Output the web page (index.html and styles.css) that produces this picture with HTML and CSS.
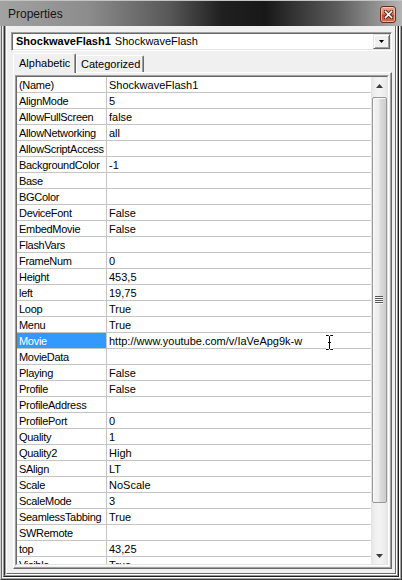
FILE: index.html
```html
<!DOCTYPE html>
<html>
<head>
<meta charset="utf-8">
<link rel="stylesheet" href="styles.css">
</head>
<body>
<div class="window">
  <div class="titlebar">
    <span class="title">Properties</span>
    <div class="close">
      <svg width="9" height="9" viewBox="0 0 9 9"><path d="M1.5 1.5 L7.5 7.5 M7.5 1.5 L1.5 7.5" stroke="#5a2418" stroke-width="3.4" stroke-linecap="square"/><path d="M1.5 1.5 L7.5 7.5 M7.5 1.5 L1.5 7.5" stroke="#ffffff" stroke-width="1.6" stroke-linecap="square"/></svg>
    </div>
  </div>
  <div class="fr fr1"><div class="fr fr2"><div class="fr fr3"><div class="fr fr4"><div class="fr fr5"><div class="fr fr6"><div class="fr fr7">
    <div class="client">
      <div class="combo">
        <span class="combo-text"><b>ShockwaveFlash1</b> ShockwaveFlash</span>
        <div class="combo-btn"><svg width="5" height="3" viewBox="0 0 5 3"><path d="M0 0 H5 L2.5 3 Z" fill="#000"/></svg></div>
      </div>
      <div class="tabs">
        <div class="tab sel">Alphabetic</div>
        <div class="tab">Categorized</div>
      </div>
      <div class="page">
        <div class="grid"><div class="grid-in">
          <div class="rows">
            <div class="row"><div class="name">(Name)</div><div class="val">ShockwaveFlash1</div></div>
            <div class="row"><div class="name">AlignMode</div><div class="val">5</div></div>
            <div class="row"><div class="name">AllowFullScreen</div><div class="val">false</div></div>
            <div class="row"><div class="name">AllowNetworking</div><div class="val">all</div></div>
            <div class="row"><div class="name">AllowScriptAccess</div><div class="val"></div></div>
            <div class="row"><div class="name">BackgroundColor</div><div class="val">-1</div></div>
            <div class="row"><div class="name">Base</div><div class="val"></div></div>
            <div class="row"><div class="name">BGColor</div><div class="val"></div></div>
            <div class="row"><div class="name">DeviceFont</div><div class="val">False</div></div>
            <div class="row"><div class="name">EmbedMovie</div><div class="val">False</div></div>
            <div class="row"><div class="name">FlashVars</div><div class="val"></div></div>
            <div class="row"><div class="name">FrameNum</div><div class="val">0</div></div>
            <div class="row"><div class="name">Height</div><div class="val">453,5</div></div>
            <div class="row"><div class="name">left</div><div class="val">19,75</div></div>
            <div class="row"><div class="name">Loop</div><div class="val">True</div></div>
            <div class="row"><div class="name">Menu</div><div class="val">True</div></div>
            <div class="row"><div class="name selected">Movie</div><div class="val">http://www.youtube.com/v/IaVeApg9k-w</div></div>
            <div class="row"><div class="name">MovieData</div><div class="val"></div></div>
            <div class="row"><div class="name">Playing</div><div class="val">False</div></div>
            <div class="row"><div class="name">Profile</div><div class="val">False</div></div>
            <div class="row"><div class="name">ProfileAddress</div><div class="val"></div></div>
            <div class="row"><div class="name">ProfilePort</div><div class="val">0</div></div>
            <div class="row"><div class="name">Quality</div><div class="val">1</div></div>
            <div class="row"><div class="name">Quality2</div><div class="val">High</div></div>
            <div class="row"><div class="name">SAlign</div><div class="val">LT</div></div>
            <div class="row"><div class="name">Scale</div><div class="val">NoScale</div></div>
            <div class="row"><div class="name">ScaleMode</div><div class="val">3</div></div>
            <div class="row"><div class="name">SeamlessTabbing</div><div class="val">True</div></div>
            <div class="row"><div class="name">SWRemote</div><div class="val"></div></div>
            <div class="row"><div class="name">top</div><div class="val">43,25</div></div>
            <div class="row"><div class="name">Visible</div><div class="val">True</div></div>
          </div>
          <div class="scroll">
            <div class="sb-btn"><svg width="7" height="4" viewBox="0 0 7 4"><path d="M3.5 0 L7 4 H0 Z" fill="#3c3c3c"/></svg></div>
            <div class="track">
              <div class="thumb"><div class="grip"></div></div>
            </div>
            <div class="sb-btn"><svg width="7" height="4" viewBox="0 0 7 4"><path d="M0 0 H7 L3.5 4 Z" fill="#3c3c3c"/></svg></div>
          </div>
        </div></div>
      </div>
    </div>
  </div></div></div></div></div></div></div>
  <svg class="ibeam" width="9" height="17" viewBox="0 0 9 17">
    <path d="M1 1.5 H3.5 L4.5 2.5 L5.5 1.5 H8 M4.5 2.5 V14.5 M1 15.5 H3.5 L4.5 14.5 L5.5 15.5 H8 M3 8.5 H6" stroke="#fff" stroke-width="3" fill="none"/>
    <path d="M1 1.5 H3.5 L4.5 2.5 L5.5 1.5 H8 M4.5 2.5 V14.5 M1 15.5 H3.5 L4.5 14.5 L5.5 15.5 H8 M3 8.5 H6" stroke="#000" stroke-width="1" fill="none"/>
  </svg>
</div>
</body>
</html>
```
FILE: styles.css
```css
html, body {
  margin: 0;
  padding: 0;
}
body {
  width: 402px;
  height: 580px;
  overflow: hidden;
  font-family: "Liberation Sans", Arial, sans-serif;
  font-size: 11px;
  color: #000;
}
.window {
  position: relative;
  width: 402px;
  height: 580px;
  display: flex;
  flex-direction: column;
  background: #f0f0f0;
}
.titlebar {
  flex: none;
  height: 26px;
  box-sizing: border-box;
  display: flex;
  align-items: center;
  justify-content: space-between;
  padding: 0 6px 0 8px;
  border-top: 1px solid #c4c4c4;
  background: linear-gradient(to right, #a2a2a2 0%, #8c8c8c 22%, #585858 42%, #202020 55%, #181818 66%, #5c5c5c 84%, #9e9e9e 96%, #b4b4b4 100%);
}
.title {
  font-size: 12px;
  color: #141414;
}
.close {
  width: 16px;
  height: 17px;
  box-sizing: border-box;
  border: 1px solid #6a2a1c;
  border-radius: 3px;
  background: linear-gradient(to bottom, #eba592 0%, #de7b63 45%, #c9472c 55%, #d8704f 100%);
  box-shadow: inset 0 0 0 1px rgba(255, 220, 210, 0.6);
  display: flex;
  align-items: center;
  justify-content: center;
  margin-top: 1px;
}
.close svg {
  display: block;
}
.fr {
  flex: 1;
  min-height: 0;
  display: flex;
  flex-direction: column;
  border-style: solid;
  border-width: 0 1px 1px 1px;
}
.fr1 { border-color: #3c3c3c #3c3c3c #3c3c3c #cfcfcf; }
.fr2 { border-color: #a4a4a4 #a4a4a4 #a4a4a4 #6a6a6a; }
.fr3 { border-color: #ffffff #ffffff #ffffff #ececec; }
.fr4 { border-color: #1e1e1e #1e1e1e #1e1e1e #9a9a9a; }
.fr5 { border-color: #9a9a9a #9a9a9a #9a9a9a #2e2e2e; }
.fr6 { border-color: #ffffff #ffffff #ffffff #a4a4a4; }
.fr7 { border-color: #6a6a6a #6a6a6a #6a6a6a #ffffff; }
.client {
  flex: 1;
  min-height: 0;
  display: flex;
  flex-direction: column;
  background: #f0f0f0;
}
.combo {
  flex: none;
  margin: 6px 3px 0 4px;
  height: 19px;
  box-sizing: border-box;
  border: 1px solid;
  border-color: #a0a0a0 #ffffff #ffffff #a0a0a0;
  box-shadow: inset 1px 1px 0 #696969, inset -1px -1px 0 #e3e3e3;
  background: #fff;
  display: flex;
  align-items: center;
  padding-left: 4px;
}
.combo-text {
  white-space: nowrap;
  line-height: 15px;
}
.combo-text b {
  margin-right: 1px;
}
.combo-btn {
  margin-left: auto;
  margin-right: 1px;
  width: 17px;
  height: 15px;
  box-sizing: border-box;
  border: 1px solid;
  border-color: #e3e3e3 #696969 #696969 #e3e3e3;
  box-shadow: inset 1px 1px 0 #ffffff, inset -1px -1px 0 #a0a0a0;
  background: #f0f0f0;
  display: flex;
  align-items: center;
  justify-content: center;
}
.combo-btn svg {
  display: block;
}
.tabs {
  flex: none;
  height: 21px;
  margin-left: 6px;
  display: flex;
  align-items: flex-end;
  position: relative;
  z-index: 1;
}
.tab {
  box-sizing: border-box;
  width: 68px;
  height: 17px;
  border: 1px solid;
  border-color: #ffffff #696969 transparent #ffffff;
  border-bottom: 0;
  box-shadow: inset -1px 0 0 #a0a0a0;
  border-radius: 2px 2px 0 0;
  background: #f0f0f0;
  padding: 1px 0 0 4px;
  line-height: 14px;
  white-space: nowrap;
}
.tab.sel {
  width: 63px;
  height: 20px;
  margin-bottom: -1px;
  padding: 2px 0 0 5px;
}
.page {
  flex: none;
  margin: 0 3px 0 6px;
  height: 497px;
  box-sizing: border-box;
  border: 1px solid;
  border-color: #ffffff #696969 #696969 #ffffff;
  box-shadow: inset -1px -1px 0 #a0a0a0;
  padding: 2px 2px 2px 1px;
}
.grid {
  border: 1px solid;
  border-color: #a0a0a0 #ffffff #ffffff #a0a0a0;
}
.grid-in {
  border: 1px solid;
  border-color: #696969 #e3e3e3 #e3e3e3 #696969;
  height: 487px;
  display: flex;
  background: #fff;
}
.rows {
  width: 354px;
  flex: none;
  overflow: hidden;
}
.row {
  display: flex;
  height: 16px;
  box-sizing: border-box;
  border-bottom: 1px solid #c4c4c4;
  white-space: nowrap;
}
.name, .val {
  box-sizing: border-box;
  padding: 2px 0 0 2px;
  line-height: 13px;
  overflow: hidden;
}
.name {
  width: 90px;
  flex: none;
  border-right: 1px solid #c4c4c4;
  letter-spacing: -0.3px;
}
.name.selected {
  background: #3399ff;
  color: #fff;
}
.val {
  flex: 1;
}
.scroll {
  width: 16px;
  flex: none;
  display: flex;
  flex-direction: column;
  background: linear-gradient(to right, #e4e4e4 0%, #efefef 25%, #f4f4f4 50%, #eeeeee 80%, #e6e6e6 100%);
}
.sb-btn {
  flex: none;
  height: 17px;
  display: flex;
  align-items: center;
  justify-content: center;
}
.sb-btn svg {
  display: block;
}
.track {
  flex: 1;
  padding: 3px 0 0 1px;
}
.thumb {
  width: 15px;
  height: 406px;
  box-sizing: border-box;
  border: 1px solid #979797;
  border-radius: 2px;
  background: linear-gradient(to right, #f4f4f4 0%, #ececec 45%, #dcdcdc 55%, #cdcdcd 100%);
  box-shadow: inset 1px 1px 0 #fafafa;
  display: flex;
  align-items: center;
  justify-content: center;
}
.grip {
  width: 8px;
  height: 8px;
  margin-left: -1px;
  background: repeating-linear-gradient(to bottom, #555555 0px, #555555 1px, #f8f8f8 1px, #f8f8f8 2px);
}
.ibeam {
  position: absolute;
  left: 325px;
  top: 334px;
  display: block;
}
```
